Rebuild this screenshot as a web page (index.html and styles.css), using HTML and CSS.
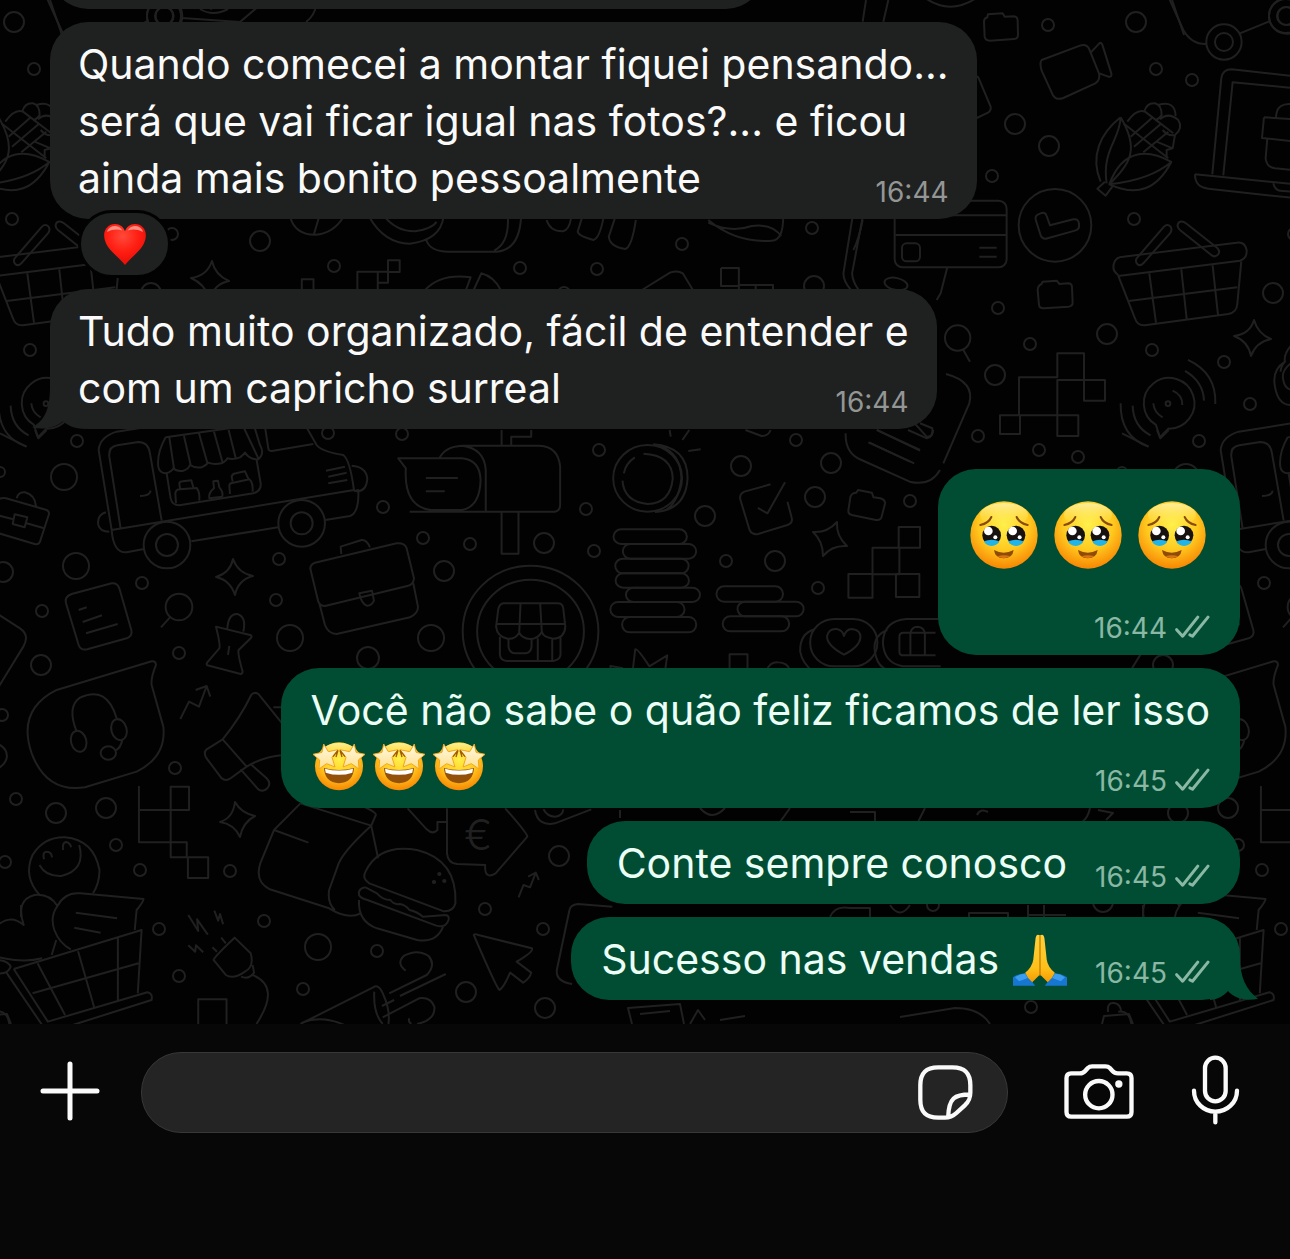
FILE: index.html
```html
<!DOCTYPE html>
<html lang="pt-BR">
<head>
  <meta charset="UTF-8">
  <meta name="viewport" content="width=device-width, initial-scale=1.0">
  <title>Conversa</title>
  <link rel="stylesheet" href="styles.css">
</head>
<body>
  <!-- shared drawings: emoji and ticks -->
  <svg class="defs" aria-hidden="true">
    <defs>
      <radialGradient id="face" cx=".5" cy=".35" r=".68">
        <stop offset="0" stop-color="#fff04a"/>
        <stop offset=".55" stop-color="#ffc91f"/>
        <stop offset="1" stop-color="#f77f00"/>
      </radialGradient>
      <linearGradient id="shine" x1="0" y1="0" x2="0" y2="1">
        <stop offset="0" stop-color="#fffbd0" stop-opacity=".7"/>
        <stop offset="1" stop-color="#fff04a" stop-opacity="0"/>
      </linearGradient>
      <linearGradient id="starFill" x1="0" y1="0" x2="0" y2="1">
        <stop offset="0" stop-color="#fffbe6"/>
        <stop offset="1" stop-color="#ffdf8c"/>
      </linearGradient>
      <radialGradient id="heartFill" cx=".45" cy=".3" r=".75">
        <stop offset="0" stop-color="#ff4a3a"/>
        <stop offset=".5" stop-color="#ff1e12"/>
        <stop offset="1" stop-color="#e30b05"/>
      </radialGradient>
      <linearGradient id="hand" x1="0" y1="0" x2="0" y2="1">
        <stop offset="0" stop-color="#ffd23c"/>
        <stop offset=".7" stop-color="#ffc01a"/>
        <stop offset="1" stop-color="#f59a00"/>
      </linearGradient>
    </defs>
    <symbol id="touched" viewBox="0 0 204 204">
      <circle cx="102" cy="102" r="101" fill="url(#face)"/>
      <ellipse cx="102" cy="42" rx="72" ry="36" fill="url(#shine)"/>
      <g fill="none" stroke="#8a4b0c" stroke-width="6" stroke-linecap="round">
        <path d="M31 72Q56 67 64 48M173 72Q148 67 140 48"/>
      </g>
      <g id="eye">
        <ellipse cx="65" cy="103" rx="28" ry="29" fill="#17110f"/>
        <path d="M42 121Q65 112 88 121Q82 134 65 135Q47 134 42 121Z" fill="#20b4e8"/>
        <circle cx="55" cy="90" r="13" fill="#fff"/>
        <circle cx="76" cy="109" r="6" fill="#fff"/>
      </g>
      <use href="#eye" x="73"/>
      <path d="M72 147Q101 163 131 147Q128 171 101 172Q75 171 72 147Z" fill="#8f4a06"/>
      <path d="M82 166Q101 160 121 166Q101 177 82 166Z" fill="#d67512"/>
    </symbol>
    <symbol id="starstruck" viewBox="0 0 156 150">
      <circle cx="78" cy="76" r="72" fill="url(#face)"/>
      <ellipse cx="78" cy="28" rx="48" ry="22" fill="url(#shine)"/>
      <path d="M33 81Q78 93 123 81Q121 124 78 127Q35 124 33 81Z" fill="#94510a"/>
      <path d="M36 83Q78 94 120 83L118 95Q78 108 38 95Z" fill="#fff"/>
      <path d="M32 9L46 32 75 26 57 49 66 78 41 68 18 84 20 57 0 40 27 34Z" fill="url(#starFill)" stroke="#f3a51d" stroke-width="3" stroke-linejoin="round"/>
      <path d="M124 9L110 32 81 26 99 49 90 78 115 68 138 84 136 57 156 40 129 34Z" fill="url(#starFill)" stroke="#f3a51d" stroke-width="3" stroke-linejoin="round"/>
      <path d="M60 47L75 28 69 48M96 47L81 28 87 48" fill="none" stroke="#a05c07" stroke-width="4"/>
    </symbol>
    <symbol id="pray" viewBox="0 0 160 154">
      <path d="M0 153V128Q16 117 36 116L66 153Z" fill="#1676d2"/>
      <path d="M160 153V128Q144 117 124 116L94 153Z" fill="#1676d2"/>
      <path d="M6 128Q20 118 36 117L44 130 18 140Z" fill="#3c9cee"/>
      <path d="M154 128Q140 118 124 117L116 130 142 140Z" fill="#3c9cee"/>
      <path d="M79 4Q70-2 67 12L60 76Q57 97 36 115 44 133 57 143L80 120 103 143Q116 133 124 115 103 97 100 76L93 12Q90-2 81 4Z" fill="url(#hand)"/>
      <path d="M80 4V124" stroke="#c97d00" stroke-width="4"/>
    </symbol>
    <symbol id="heart" viewBox="0 0 126 124">
      <path d="M63 124C42 96 0 74 0 34 0 14 14 0 33 0 48 0 58 9 63 22 68 9 78 0 93 0 112 0 126 14 126 34 126 74 84 96 63 124Z" fill="url(#heartFill)"/>
      <path d="M8 24Q14 6 34 6 48 7 55 20 34 12 8 24ZM118 24Q112 6 92 6 78 7 71 20 92 12 118 24Z" fill="#ffb3a8" opacity=".75"/>
    </symbol>
    <symbol id="ticks" viewBox="828 193 106 72">
      <path d="M833 237L851 257 897 199M873 253L881 257 928 199" fill="none" stroke="currentColor" stroke-width="9" stroke-linecap="round" stroke-linejoin="round"/>
    </symbol>
  </svg>

  <main class="chat">
    <svg class="wallpaper" aria-hidden="true">
      <g id="doodles">
        <g>
          <circle cx="34" cy="69" r="6"/><circle cx="12" cy="219" r="6"/><circle cx="30" cy="350" r="6"/><circle cx="172" cy="234" r="6"/>
          <circle cx="14" cy="22" r="10"/><circle cx="260" cy="241" r="10"/><circle cx="328" cy="433" r="6"/><circle cx="402" cy="434" r="6"/>
          <circle cx="77" cy="441" r="6"/><circle cx="64" cy="477" r="13"/><circle cx="383" cy="507" r="6"/><circle cx="0" cy="472" r="5"/>
          <circle cx="76" cy="566" r="13"/><circle cx="3" cy="572" r="10"/><circle cx="142" cy="583" r="6"/><circle cx="279" cy="559" r="6"/>
          <circle cx="276" cy="600" r="6"/><circle cx="42" cy="611" r="6"/><circle cx="290" cy="638" r="13"/><circle cx="368" cy="658" r="11"/>
          <circle cx="41" cy="665" r="10"/><circle cx="179" cy="653" r="6"/><circle cx="175" cy="768" r="6"/><circle cx="16" cy="799" r="6"/>
          <circle cx="56" cy="813" r="10"/><circle cx="106" cy="808" r="10"/><circle cx="2" cy="715" r="6"/><circle cx="599" cy="450" r="6"/>
          <circle cx="741" cy="466" r="10"/><circle cx="796" cy="440" r="6"/><circle cx="831" cy="463" r="10"/><circle cx="586" cy="509" r="6"/>
          <circle cx="705" cy="516" r="10"/><circle cx="815" cy="497" r="10"/><circle cx="910" cy="501" r="6"/><circle cx="423" cy="538" r="6"/>
          <circle cx="470" cy="544" r="6"/><circle cx="544" cy="543" r="10"/><circle cx="594" cy="551" r="6"/><circle cx="444" cy="571" r="10"/>
          <circle cx="726" cy="561" r="6"/><circle cx="775" cy="561" r="10"/><circle cx="818" cy="588" r="6"/><circle cx="431" cy="638" r="13"/>
          <circle cx="116" cy="845" r="6"/><circle cx="5" cy="862" r="6"/><circle cx="140" cy="870" r="6"/><circle cx="230" cy="871" r="6"/>
          <circle cx="264" cy="921" r="6"/><circle cx="159" cy="929" r="6"/><circle cx="179" cy="976" r="6"/><circle cx="318" cy="947" r="13"/>
          <circle cx="377" cy="951" r="6"/><circle cx="303" cy="989" r="6"/><circle cx="466" cy="992" r="10"/><circle cx="559" cy="856" r="10"/>
          <circle cx="485" cy="909" r="6"/><circle cx="543" cy="929" r="6"/><circle cx="545" cy="1008" r="10"/><circle cx="1048" cy="25" r="6"/>
          <circle cx="70" cy="80" r="6"/><circle cx="1015" cy="124" r="10"/><circle cx="1049" cy="146" r="10"/><circle cx="992" cy="176" r="6"/>
          <circle cx="151" cy="293" r="10"/><circle cx="998" cy="308" r="6"/><circle cx="1107" cy="334" r="10"/><circle cx="1030" cy="344" r="6"/>
          <circle cx="995" cy="375" r="10"/><circle cx="102" cy="362" r="6"/><circle cx="128" cy="404" r="6"/><circle cx="978" cy="436" r="6"/>
          <circle cx="1039" cy="450" r="6"/><circle cx="1078" cy="457" r="6"/><circle cx="334" cy="266" r="6"/><circle cx="520" cy="268" r="6"/>
          <circle cx="597" cy="269" r="6"/><circle cx="682" cy="244" r="6"/><circle cx="812" cy="228" r="6"/><circle cx="814" cy="286" r="10"/>
          <circle cx="564" cy="293" r="6"/><circle cx="1031" cy="1007" r="6"/><circle cx="933" cy="905" r="6"/><circle cx="1103" cy="902" r="10"/>
        </g>
        <!-- sparkles -->
        <path d="M212 261Q215 275 229 281 214 284 210 299 205 284 191 278 207 276 212 261Z"/>
        <path d="M233 559Q238 573 253 576 238 580 235 595 230 580 216 577 230 573 233 559Z"/>
        <path d="M235 802Q241 813 255 816 243 822 240 837 234 824 220 822 233 818 235 802Z"/>
        <path d="M837 522Q836 536 847 546 832 545 823 556 823 541 813 532 827 533 837 522Z"/>
        <path d="M1254 320Q1258 334 1271 339 1256 342 1251 356 1248 341 1234 336 1250 334 1254 320Z"/>

        <!-- top right: folder, camera, corn, card, basket, pixels, radar -->
        <g transform="translate(860 0) scale(.3333)">
          <path d="M372 65Q372 55 382 52L384 43 428 40 434 50 462 49Q472 50 473 60L474 104Q474 116 462 117L390 122Q376 122 374 110Z"/>
          <path d="M545 180L660 137Q680 130 688 148L717 220Q722 240 706 250L610 294Q588 302 578 284L545 212Q538 190 545 180ZM692 158L718 130Q723 126 727 134L754 220Q757 232 745 230L718 220"/>
          <path d="M340 222L355 232 392 320Q394 332 384 338L338 360"/>
          <path d="M782 352C720 400 690 470 722 545M782 352C780 420 725 450 740 550M782 352C840 450 810 490 748 553M748 553C790 440 870 450 934 486 890 570 830 590 748 553ZM748 553Q870 540 934 486M735 545L712 566 737 587 757 560"/>
          <path d="M790 370L925 475M802 365Q830 325 855 335L940 400M853 335Q860 308 885 310 905 315 905 345 900 355 885 362M895 315Q945 300 947 348M900 358Q925 335 955 360 970 385 945 405 925 410 908 390M812 410L880 350M822 440L905 370M850 457L925 395M945 405L938 445 920 450V475M938 445L890 425"/>
          <circle cx="1092" cy="126" r="53"/><circle cx="1092" cy="126" r="27"/><circle cx="1280" cy="48" r="53"/><circle cx="1280" cy="48" r="27"/>
          <path d="M925-10L970 90Q995 134 1040 132M1140 100L1228 64M190-10Q270 50 355-10M18 0L8 65M85 0L70 65"/>
          <path d="M1057 523L1084 235Q1088 208 1115 208L1300 228M1090 526L1118 247 1300 264M1005 523L1300 552M1005 523Q1005 562 1045 566L1300 594M1240 550Q1245 575 1270 573L1300 575M1300 313Q1250 305 1248 352M1212 352L1300 358M1212 352L1206 414 1300 424M1222 416L1217 475Q1220 502 1245 505L1300 510"/>
          <rect x="104" y="602" width="336" height="200" rx="24"/><rect x="126" y="730" width="54" height="54" rx="14"/>
          <path d="M106 646H438M106 705H438M358 743H410M358 770H410M262 802L242 880 230 900M8 660Q-4 720-20 750"/>
          <ellipse cx="108" cy="852" rx="35" ry="18" transform="rotate(12 108 852)"/>
          <circle cx="585" cy="676" r="109"/>
          <path d="M528 662Q522 646 540 641 556 634 560 648L570 676 640 658Q656 655 657 672 660 688 645 692L563 715Q548 720 542 706Z"/>
          <path d="M533 870Q534 856 545 852L548 845 590 842 598 852 624 850Q636 850 636 862L638 908Q638 918 626 920L552 925Q538 926 537 914Z"/>
          <path d="M775 825Q755 812 762 790 768 770 790 770L1130 728Q1155 724 1160 750 1162 775 1140 782L775 828 825 955Q832 978 855 976L1105 942Q1130 938 1132 912L1144 784M868 820L888 968M964 808L980 956M1058 796L1074 944M806 903L1132 862"/>
          <path d="M830 775L912 680Q922 670 932 680 938 690 930 700L850 790Q840 800 832 792 825 785 830 775ZM978 670L1072 744Q1082 755 1074 764 1064 774 1054 765L960 690Q948 680 956 668 966 660 978 670Z"/>
          <circle cx="293" cy="1014" r="38"/><path d="M310 1050L330 1085"/>
          <path d="M477 1132H592V1060H672V1140H735V1202H672V1140H592V1246H655V1308H592V1246H477ZM420 1246H480V1302H420Z"/>
          <path d="M888 1275A76 76 0 1 1 925 1286L900 1312ZM880 1210Q882 1238 908 1252M938 1172Q968 1185 967 1215M975 1113Q1030 1145 1032 1202M984 1080Q1070 1120 1066 1212M818 1217Q820 1280 872 1306M782 1210Q780 1310 865 1340"/>
          <circle cx="924" cy="1211" r="7"/>
          <path d="M258 1122Q345 1145 328 1210L250 1390M150 1255L200 1310Q220 1312 217 1285L180 1270M50 1290L180 1350M25 1327L150 1385"/>
          <path d="M1300 1030Q1270 1060 1275 1085 1235 1110 1245 1160 1255 1220 1300 1215M1300 1085Q1262 1110 1270 1140 1275 1170 1300 1170M1275 1085Q1262 1100 1262 1115"/>
        </g>

        <!-- strip between the two incoming bubbles -->
        <g transform="translate(160 200) scale(.51 .3333)">
          <path d="M255 50Q265 105 305 104 340 100 360 50M312 50L302 102M410 50Q440 130 490 131 550 120 556 50M440 50Q465 95 500 94 535 85 542 65M522 120Q530 155 565 155H660Q705 150 708 50M682 50Q685 130 655 152M758 60Q765 95 790 94 802 90 806 55M828 50L819 95Q820 108 850 120 862 115 870 50M893 50L880 110Q882 140 912 147 925 142 933 60M1075 60Q1130 130 1200 122 1222 120 1222 50M1075 68Q1120 100 1160 78 1200 70 1218 108M1358 50L1340 220Q1340 245 1355 270M1378 50L1357 220Q1358 245 1370 270"/>
          <path d="M278 270V238H301V270M387 270V215H427V270M427 215H447V181H470V216H447V248H427M520 270Q550 220 609 232L600 270M615 270L630 220Q655 230 668 270M945 270L1000 218Q1015 210 1025 220L1045 270M1100 204H1135V270M1100 204V258H1135M1135 255H1202V280M1168 255V280"/>
        </g>

        <!-- truck, briefcases, note, headset bubble, megaphone -->
        <g transform="translate(0 430) scale(.3333)">
          <path d="M296 60Q300 20 350 5L700-50Q850-70 890-60L950 45Q965 65 1030 75 1050 90 1062 180L335 300ZM335 300Q340 370 380 367L432 357M574 334L834 292M976 270L1050 258Q1078 248 1075 180L1062 184"/>
          <path d="M362 296L328 80Q325 50 352 46L415 36Q445 36 450 70L485 272M420 198Q450 198 452 182M795-10L805 55Q806 65 820 62L940 42M978 122L1035 110M985 140L1040 128M985 160L1042 150M1055 107Q1098 110 1102 145 1100 185 1068 184M318 247Q290 255 295 285 300 305 328 305"/>
          <path d="M497 22Q470 70 475 110 478 130 498 130 515 125 520 115 530 125 550 122 565 118 570 105 585 115 605 112 620 105 625 98 640 105 665 100 680 92 682 85 700 90 720 82 730 75 735 68 750 90 775 88 795 70 780 45L760-20M497 22L720-10M508 22L522 115M552 18L572 105M597 10L622 98M642 5L668 98M686 0L708 88M732-6L775 85M500 130L512 205Q516 226 538 226L760 190Q785 182 782 160L770 90"/>
          <path d="M528 220L526 190Q528 178 540 178L590 174Q600 186 598 212M540 175L538 160Q540 154 548 154L574 151 580 172M628 205Q625 188 642 175L640 154 654 152 658 172Q670 185 667 200ZM690 192L688 165Q690 158 700 158L748 148Q760 158 758 185M698 155L695 140Q698 130 708 130L735 124 745 146"/>
          <circle cx="501" cy="345" r="70"/><circle cx="501" cy="345" r="33"/><circle cx="905" cy="280" r="70"/><circle cx="905" cy="280" r="33"/>
          <path d="M-20 225Q-5 200 18 205L140 240Q150 245 146 255L120 335Q116 345 104 342L-20 305M-10 255L40 268M80 280L130 294M44 253L82 262 74 292 38 282ZM50 205Q55 185 75 187 105 195 108 228"/>
          <path d="M198 520Q192 500 215 492L335 460Q352 458 358 475L394 600Q398 618 380 625L262 658Q242 662 236 645ZM236 540L260 532M248 576L306 556M258 610L353 582"/>
          <circle cx="537" cy="531" r="40"/><path d="M510 562L483 592"/>
          <path d="M648 590L753 616Q757 620 752 625L716 660Q712 668 728 725 727 732 722 732L622 706Q618 702 622 697L658 655Q662 645 648 590ZM682 597Q685 550 712 552 740 560 730 605M688 648L684 675"/>
          <path d="M932 420Q928 405 945 398L1190 340Q1215 338 1220 355L1242 445Q1240 465 1222 468L975 528Q960 528 955 515ZM958 520L975 585Q985 612 1010 612L1230 562Q1255 550 1254 530L1240 460M1024 372L1022 350 1085 330Q1100 328 1110 352M1078 490L1116 482 1122 512Q1115 528 1100 527 1085 522 1078 490Z"/>
          <path d="M-10 550L60 595Q90 615 70 650L-10 780"/>
          <path d="M170 780L455 694Q468 692 468 705 452 745 455 765L490 890Q500 980 410 1025L255 1072Q140 1090 95 970 50 840 170 780Z"/>
          <path d="M230 905Q200 830 240 803 320 765 350 865M367 930Q362 955 345 962"/>
          <ellipse cx="236" cy="934" rx="23" ry="32" transform="rotate(-15 236 934)"/><ellipse cx="357" cy="899" rx="23" ry="32" transform="rotate(-15 357 899)"/><ellipse cx="325" cy="969" rx="23" ry="20"/>
          <path d="M541 867L567 815 597 830 620 768M587 780L620 768 631 800M755 793Q765 785 775 792L850 885M820 832H850M755 793Q720 865 668 928M668 928L620 958Q608 970 622 988L665 1045Q678 1055 692 1045L740 1010M668 928L740 1010Q790 980 850 975M722 1018L775 1078Q790 1088 802 1075 815 1060 800 1045L755 1005"/>
          <path d="M-10 940Q25 955 20 985 15 1005-10 1018M0 10L80 50M105 0L115 25 140 0"/>
        </g>

        <!-- mailbox, coins, shop, check box, pixels, likes -->
        <g transform="translate(400 430) scale(.3444 .3333)">
          <path d="M-5 85H180Q232 90 234 150 232 230 180 240H90Q10 230 17 115ZM28 245H450Q465 242 465 225V110Q460 50 405 47H180Q130 50 115 84M180 47Q245 55 249 120V243M75 144H168M75 184H130M295 245V371H344V245M295 0V45M323 45V20H381V0"/>
          <circle cx="719" cy="145" r="100"/><path d="M735 43Q835 50 835 145 830 240 740 246M755 48Q815 70 817 145 810 215 770 242M707 71Q790 75 792 145 785 220 719 222 650 215 646 152M650 130Q655 100 682 82M783 0L786 20M840 0L820 30M837 63L873 58"/>
          <rect x="620" y="298" width="213" height="44" rx="22"/><rect x="647" y="342" width="213" height="44" rx="22"/><rect x="625" y="386" width="213" height="44" rx="22"/><rect x="626" y="430" width="213" height="43" rx="22"/><rect x="656" y="473" width="215" height="43" rx="22"/><rect x="611" y="516" width="215" height="45" rx="22"/><rect x="645" y="561" width="215" height="46" rx="22"/>
          <rect x="919" y="469" width="193" height="46" rx="22"/><rect x="980" y="515" width="192" height="44" rx="22"/><rect x="937" y="559" width="193" height="45" rx="22"/>
          <circle cx="379" cy="604" r="197"/><circle cx="379" cy="604" r="155"/>
          <path d="M300 520H458Q472 520 474 535L480 590Q478 625 445 626 415 622 412 605 400 627 378 627 355 625 346 608 335 628 312 626 282 620 279 590L285 540Q288 522 300 520ZM280 582H480M350 520L346 610M407 520L412 610M290 620V675Q292 692 310 693H445Q464 690 466 675V620M315 625V650Q318 670 335 670H365Q380 668 382 650V628M400 625V690M442 628V690"/>
          <path d="M1076 163L1000 185Q985 192 988 208L1015 300Q1022 315 1040 312L1125 285Q1142 278 1137 262L1125 215M1039 234L1067 250 1118 157"/>
          <path d="M1308 200Q1312 188 1325 188L1330 180 1370 188 1375 202 1395 205Q1410 210 1408 222L1398 262Q1395 272 1382 270L1312 255Q1300 252 1302 240Z"/>
          <path d="M1302 432H1372V503H1302ZM1372 353H1450V433H1372ZM1448 291H1510V353H1448ZM1440 432H1508V501H1440Z"/>
          <path d="M1294 10Q1292 70 1340 90L1480 155Q1540 170 1568 120M1362 37L1493 100M1385 0L1510 62M1475 0L1530 25Q1548 20 1548 0M1003 0L1050 18Q1070 18 1076 0"/>
          <rect x="1191" y="567" width="195" height="142" rx="70"/><path d="M1205 598Q1160 610 1162 665 1168 700 1200 725M1289 674Q1238 645 1240 618 1245 595 1268 597 1285 600 1289 618 1295 598 1312 597 1338 600 1337 622 1335 650 1289 674Z"/>
          <path d="M1570 567H1470Q1405 572 1402 637 1405 700 1460 709H1570M1415 600Q1365 620 1382 680 1390 710 1415 720M1450 620Q1450 608 1462 608H1555M1450 620V665Q1450 676 1462 676H1555M1482 676V610Q1485 590 1503 590 1522 592 1524 610V676"/>
          <path d="M611 720V708L648 715M676 720L683 658Q690 655 724 709L776 676 770 720M957 720V673H1009V720M1065 720Q1075 695 1098 697 1125 698 1132 720"/>
        </g>

        <!-- bottom: smileys cart, plug, burger, price tag, cursor -->
        <g transform="translate(0 800) scale(.3827 .3333)">
          <path d="M103 284Q60 230 85 165 115 110 170 112 245 120 260 210 260 250 243 280M103 195Q120 230 160 228 225 210 207 135M115 178Q110 155 122 155 135 155 136 172M165 150Q162 127 173 126 183 128 186 142"/>
          <path d="M-10 380Q25 340 62 375 40 300 90 285 130 280 150 318M150 318Q170 275 210 280L375 297Q375 305 357 330L352 390M150 318Q130 350 142 390 155 430 185 448M147 420L135 465M-10 470Q60 490 110 475M198 338L306 355M194 383L263 398M-10 520Q20 525 28 500 20 480-10 480"/>
          <path d="M36 507L370 390 360 580M36 507L125 665 385 577Q400 580 396 600L190 675M15 515L110 675M98 490L170 645M204 454L246 622M308 415V600M85 580L362 490M-10 635Q20 630 25 675"/>
          <path d="M363 -40V127H446V30H363ZM363 30H494V-40H446V172H488V127H446M491 172H544V234H491V172"/>
          <path d="M785 10L716 90 680 190Q665 245 705 268L860 325Q910 360 942 340M785 10L970 77 982 45Q985 38 950 20M970 77L988 175M970 77Q900 150 885 190L860 270Q855 310 875 330M716 90L806 128"/>
          <path d="M965 250Q945 235 955 215 990 130 1090 150 1195 180 1190 310 1185 335 1160 334ZM955 262Q935 265 938 285 942 295 960 300L1140 377Q1165 385 1172 360 1175 348 1165 345M955 262L985 280Q1000 300 1020 300 1030 315 1045 312 1060 315 1070 330 1090 335 1105 350L1165 345M938 300Q935 365 985 385L1090 420Q1140 430 1158 380"/>
          <circle cx="1148" cy="222" r="3"/><circle cx="1134" cy="246" r="3"/><circle cx="1161" cy="243" r="3"/>
          <path d="M1065 25L1115 88Q1130 105 1143 90V66H1168M1168 25V160Q1170 190 1195 192L1268 195Q1265 240 1295 220L1378 110Q1378 100 1320 25M1355 292L1368 255 1385 262 1400 218M1380 230L1400 218 1408 240"/>
          <path d="M492 345L518 393 515 358 543 404M560 332L570 362 575 342 583 373M492 436L510 455 512 436 531 457M578 413L590 430M555 442L567 455M613 413L655 460Q665 500 640 515 610 540 590 525L558 480Q560 470 613 413ZM660 495L664 518Q650 540 630 530M660 525Q735 560 670 672M518 672V598H592V672"/>
          <path d="M1238 405Q1240 400 1250 405L1390 445Q1395 455 1350 485L1388 518Q1385 535 1367 548L1333 518Q1315 565 1305 570 1298 565 1238 405Z"/>
          <path d="M785 672L975 562Q990 550 1002 585 1020 630 1015 672M978 575Q975 640 1000 672M790 668Q840 645 900 675M1060 512Q1035 490 1055 468 1090 445 1120 468 1140 495 1115 525L1017 580M1165 522L1045 588M1030 600L998 618M1000 652L1095 595Q1125 590 1135 620 1138 660 1090 672M1075 672Q1065 665 1070 655"/>
          <path d="M1600 320L1510 312Q1490 315 1488 330L1455 510Q1452 545 1495 552M1398 30Q1405 80 1450 70L1545 28M1420 28Q1430 50 1450 50 1470 48 1472 28"/>
        </g>
        <text x="464" y="850">€</text>

        <!-- slivers that show between the outgoing bubbles -->
        <path d="M620 810V818M700 808Q712 822 725 808M790 808L780 822M850 812H875V822M925 808L918 822M977 815Q980 808 988 812M1090 808Q1088 818 1082 822M1098 810L1113 813 1106 820M830 917Q835 905 850 908H870V918M890 905Q900 920 910 905M969 917V913H1008V917M1028 905V917M1044 905V917M1028 915H1066M1143 917V905"/>
        <path d="M900 1017L955 1008Q980 1008 990 1024M632 1024L628 1008 680 1004 684 1024M690 1024L698 1010 705 1020M720 1020L745 1016M640 1014L670 1011M1102 1024L1104 1016 1129 1014 1133 1024M1108 1012Q1107 1002 1114 1003 1121 1004 1121 1012"/>
        <path d="M50 0L62 35M210 9L235 0"/>
        <circle cx="164" cy="16" r="17"/><circle cx="164" cy="16" r="9"/>
        <path d="M182 18L240 22 260 5M200 9Q213 17 228 9M316 5Q315 15 306 22"/>
      </g>
      <use href="#doodles" x="1122"/>
      <use href="#doodles" x="-1122"/>
    </svg>

    <div class="bubble received previous"></div>

    <div class="bubble received">
      <p>Quando comecei a montar fiquei pensando...</p>
      <p>será que vai ficar igual nas fotos?... e ficou</p>
      <div class="last-line">
        <p>ainda mais bonito pessoalmente</p>
        <span class="meta"><time>16:44</time></span>
      </div>
    </div>
    <button class="reaction" aria-label="Reação: coração"><svg><use href="#heart"/></svg></button>

    <div class="bubble received">
      <p>Tudo muito organizado, fácil de entender e</p>
      <div class="last-line">
        <p>com um capricho surreal</p>
        <span class="meta"><time>16:44</time></span>
      </div>
      <svg class="tail tail-left" viewBox="97 1159 162 129" aria-hidden="true"><path d="M151 1159C151 1235 132 1264 97 1283 130 1292 165 1285 190 1265 210 1282 230 1288 259 1288V1159Z"/></svg>
    </div>

    <div class="bubble sent first-sent">
      <div class="big-emoji" role="img" aria-label="Três rostos emocionados">
        <svg><use href="#touched"/></svg>
        <svg><use href="#touched"/></svg>
        <svg><use href="#touched"/></svg>
      </div>
      <div class="last-line">
        <span class="meta"><time>16:44</time><svg class="ticks" role="img" aria-label="Entregue"><use href="#ticks"/></svg></span>
      </div>
    </div>

    <div class="bubble sent">
      <p>Você não sabe o quão feliz ficamos de ler isso</p>
      <div class="last-line">
        <div class="emoji-row" role="img" aria-label="Três rostos com olhos de estrela">
          <svg><use href="#starstruck"/></svg>
          <svg><use href="#starstruck"/></svg>
          <svg><use href="#starstruck"/></svg>
        </div>
        <span class="meta"><time>16:45</time><svg class="ticks" role="img" aria-label="Entregue"><use href="#ticks"/></svg></span>
      </div>
    </div>

    <div class="bubble sent">
      <div class="last-line">
        <p>Conte sempre conosco</p>
        <span class="meta"><time>16:45</time><svg class="ticks" role="img" aria-label="Entregue"><use href="#ticks"/></svg></span>
      </div>
    </div>

    <div class="bubble sent">
      <div class="last-line">
        <p class="with-emoji">Sucesso nas vendas <svg role="img" aria-label="Mãos juntas"><use href="#pray"/></svg></p>
        <span class="meta"><time>16:45</time><svg class="ticks" role="img" aria-label="Entregue"><use href="#ticks"/></svg></span>
      </div>
      <svg class="tail tail-right" viewBox="931 470 144 132" aria-hidden="true"><path d="M1020 470C1021 535 1040 572 1075 598 1040 606 1005 598 985 575 970 592 950 601 931 602V470Z"/></svg>
    </div>
  </main>

  <footer class="composer">
    <button class="plus" aria-label="Anexar">
      <svg viewBox="0 0 60 60"><path d="M30 3V57M3 30H57"/></svg>
    </button>
    <div class="field">
      <input type="text" aria-label="Mensagem">
      <button class="sticker" aria-label="Figurinhas">
        <svg viewBox="55 101 164 166"><path d="M61 162C61 125 78 108 115 108H158C195 108 212 125 212 162V184C212 202 208 210 196 222L170 246C158 257 150 260 135 260H115C78 260 61 243 61 206ZM211 190C165 190 147 200 145 258"/></svg>
      </button>
    </div>
    <button class="camera" aria-label="Câmera">
      <svg viewBox="491 100 209 165"><path d="M498 142Q498 128 512 128H538Q548 128 554 121L562 112Q567 107 575 107H615Q623 107 628 112L636 121Q642 128 652 128H679Q693 128 693 142V244Q693 258 679 258H512Q498 258 498 244Z"/><circle cx="595" cy="192" r="41"/><circle class="dot" cx="655" cy="160" r="11"/></svg>
    </button>
    <button class="mic" aria-label="Gravar áudio">
      <svg viewBox="873 73 145 210"><rect x="914" y="81" width="62" height="131" rx="31"/><path d="M881 180C881 216 910 243 945 243S1010 216 1010 180M945 243V275"/></svg>
    </button>
  </footer>
</body>
</html>
```
FILE: styles.css
```css
* {
  box-sizing: border-box;
}

body {
  margin: 0;
  height: 100vh;
  display: flex;
  flex-direction: column;
  background-color: #070707;
  color: #fafafa;
  font-family: Inter, "Liberation Sans", sans-serif;
  font-size: 41px;
  line-height: 57px;
}

p {
  margin: 0;
}

button {
  padding: 0;
  border: none;
  background: none;
  color: inherit;
  cursor: pointer;
}

svg {
  display: block;
}

.defs {
  position: absolute;
  width: 0;
  height: 0;
}

/* Chat */
.chat {
  position: relative;
  flex: 1;
  min-height: 0;
  display: flex;
  flex-direction: column;
  justify-content: flex-end;
  padding: 0 50px 24px;
  overflow: hidden;
  background-color: #020202;
}

.wallpaper {
  position: absolute;
  top: 0;
  left: 0;
  width: 100%;
  height: 100%;
  fill: none;
  stroke: #202020;
  stroke-width: 2;
  stroke-linejoin: round;
}

.wallpaper * {
  vector-effect: non-scaling-stroke;
}

.wallpaper text {
  font-size: 42px;
  font-weight: 300;
  fill: #202020;
  stroke: none;
}

.bubble {
  position: relative;
  isolation: isolate;
  flex-shrink: 0;
  max-width: 960px;
  margin-top: 13px;
  padding: 14px 28px 12px;
  border-radius: 38px;
}

.received {
  align-self: flex-start;
  background-color: #1f2120;
}

.sent {
  align-self: flex-end;
  padding-left: 30px;
  padding-right: 30px;
  background-color: #014d33;
  color: #ecfff6;
}

.previous {
  width: 60%;
  max-width: 715px;
  height: 83px;
}

.first-sent {
  margin-top: 40px;
}

.last-line {
  display: flex;
  justify-content: space-between;
  gap: 28px;
}

.meta {
  display: flex;
  align-items: center;
  gap: 8px;
  margin-left: auto;
  padding-top: 28px;
  font-size: 28px;
  line-height: 29px;
  color: #949695;
}

.sent .meta {
  color: #8ab8a4;
}

.ticks {
  width: 35px;
  height: 24px;
  margin-bottom: 4px;
}

/* the tail sits under the bubble's text */
.tail {
  position: absolute;
  bottom: 0;
  z-index: -1;
}

.tail-left {
  left: -18px;
  width: 54px;
  height: 43px;
  fill: #1f2120;
}

.tail-right {
  right: -18px;
  width: 48px;
  height: 44px;
  fill: #014d33;
}

/* Emoji */
.reaction {
  position: relative;
  align-self: flex-start;
  flex-shrink: 0;
  display: flex;
  justify-content: center;
  align-items: center;
  width: 93px;
  height: 68px;
  margin: -9px 0 -2px 28px;
  border: 3px solid #020202;
  border-radius: 34px;
  background-color: #1f2120;
}

.reaction svg {
  width: 42px;
  height: 41px;
}

.big-emoji {
  display: flex;
  gap: 16px;
  padding: 18px 4px 35px 2px;
}

.big-emoji svg {
  width: 68px;
  height: 68px;
}

.first-sent .meta {
  padding-top: 10px;
}

.emoji-row {
  display: flex;
  align-items: flex-start;
  gap: 8px;
  padding: 2px 0 0 2px;
}

.emoji-row svg {
  width: 52px;
  height: 50px;
}

.with-emoji {
  display: flex;
  align-items: center;
  gap: 14px;
}

.with-emoji svg {
  width: 54px;
  height: 52px;
}

/* Composer */
.composer {
  flex-shrink: 0;
  display: flex;
  align-items: flex-start;
  height: 235px;
  padding: 28px 50px 0 40px;
  background-color: #070707;
}

.composer svg {
  width: 100%;
  height: 100%;
  fill: none;
  stroke: #fafafa;
  stroke-width: 13;
  stroke-linecap: round;
  stroke-linejoin: round;
}

.composer .plus svg {
  stroke-width: 5;
}

.composer .dot {
  fill: #fafafa;
  stroke: none;
}

.plus {
  width: 60px;
  height: 60px;
  margin-top: 9px;
}

.field {
  flex: 1;
  display: flex;
  align-items: center;
  height: 81px;
  margin: 0 56px 0 41px;
  padding: 0 34px;
  border: 1px solid #383838;
  border-radius: 40px;
  background-color: #242424;
}

.field input {
  flex: 1;
  min-width: 0;
  border: none;
  outline: none;
  background: none;
  color: inherit;
  font: inherit;
}

.sticker {
  width: 55px;
  height: 55px;
}

.camera {
  width: 70px;
  height: 55px;
  margin: 12px 57px 0 0;
}

.mic {
  width: 49px;
  height: 70px;
  margin-top: 3px;
}
```
